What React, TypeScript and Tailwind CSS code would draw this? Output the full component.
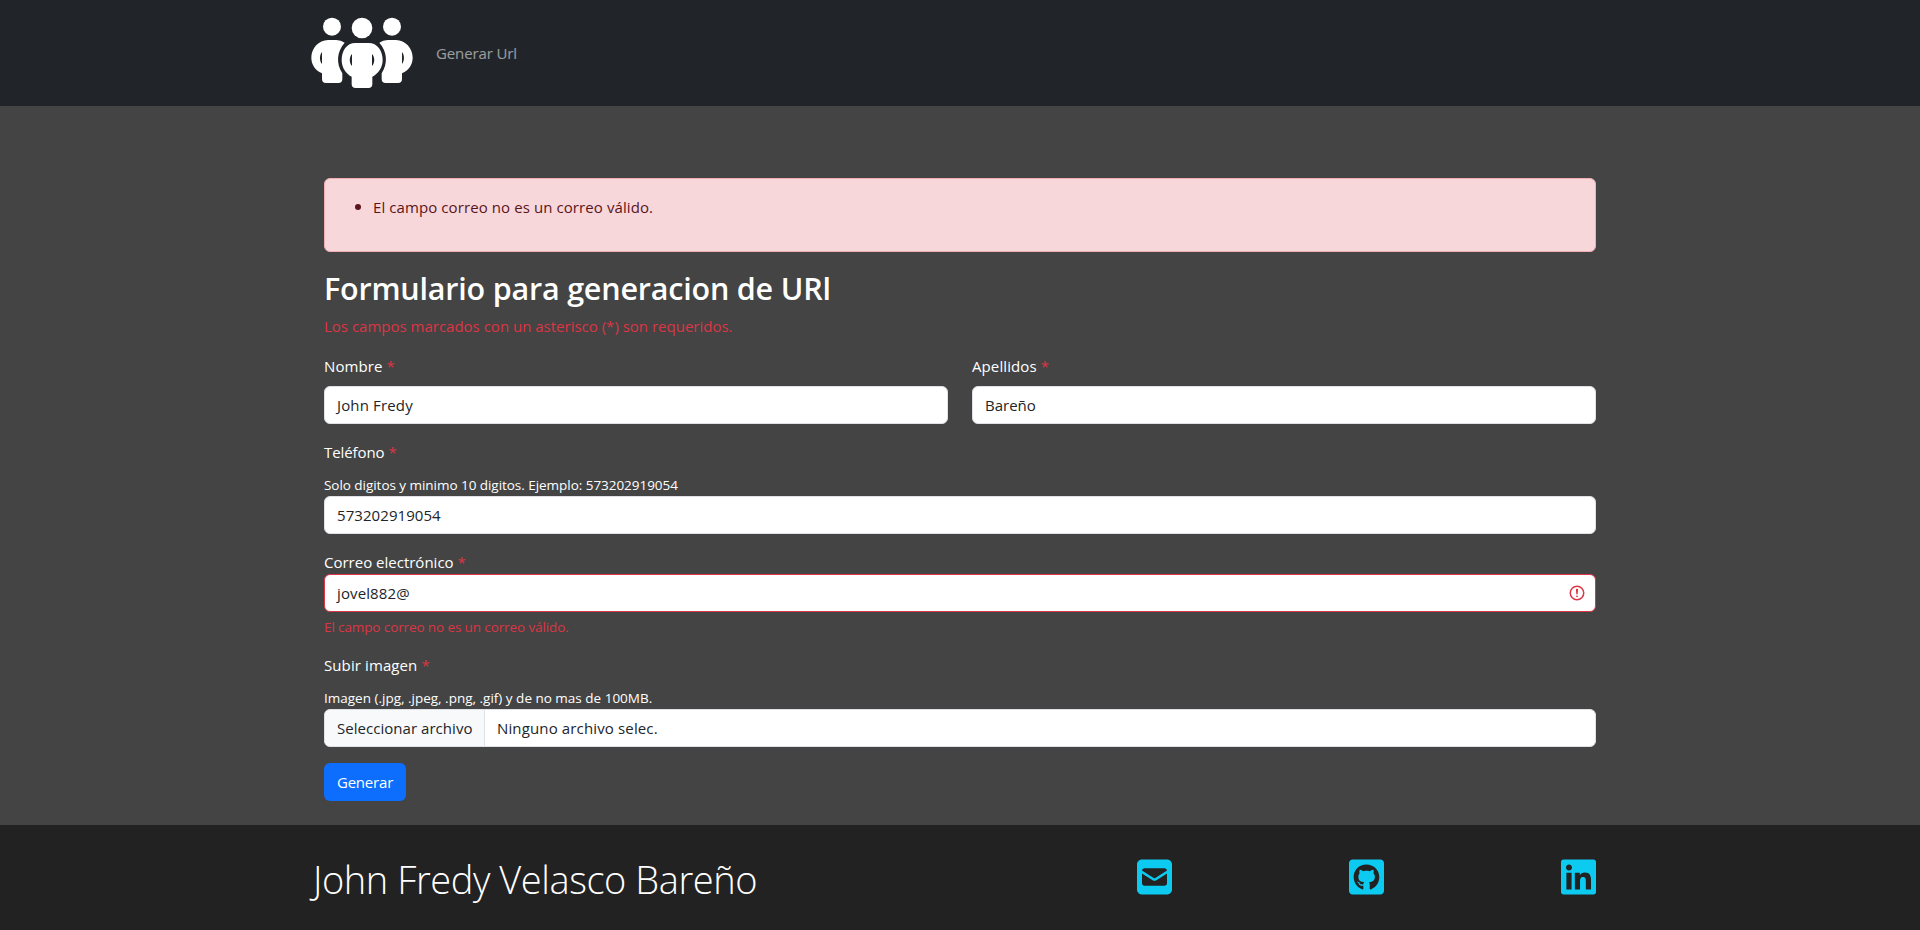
import type { ReactNode } from "react";
import { FaSquareEnvelope } from "react-icons/fa6";
import { FaGithubSquare, FaLinkedin } from "react-icons/fa";

function Logo() {
  const side = (
    <>
      <circle cx="72" cy="50" r="27" />
      <path
        fillRule="evenodd"
        d="M60 90H85Q99 90 110 98C86 125 84 160 103 190V207Q103 219 91 219H54Q42 219 42 207V190C20 180 10 162 10 143C10 115 32 90 60 90ZM42 126C34 136 34 152 42 162Z"
      />
    </>
  );
  return (
    <svg className="h-[86px] w-[104px] overflow-visible" viewBox="12 0 312 258" fill="white">
      {side}
      <g transform="translate(324 0) scale(-1 1)">{side}</g>
      <circle cx="162" cy="54" r="31" />
      <path
        fillRule="evenodd"
        d="M142 99H182C208 99 224 122 224 150C224 172 211 191 193 200V222Q193 234 181 234H143Q131 234 131 222V200C113 191 101 172 101 150C101 122 116 99 142 99ZM132 132C123 142 123 158 132 168ZM192 132V168C201 158 201 142 192 132Z"
      />
    </svg>
  );
}

function Label({ children, className = "" }: { children: ReactNode; className?: string }) {
  return (
    <label className={`block text-[15px] leading-6 ${className}`}>
      {children} <span className="text-[#dc3545]">*</span>
    </label>
  );
}

function Box({ children, className = "border-[#dee2e6]" }: { children: ReactNode; className?: string }) {
  return (
    <div
      className={`flex h-[38px] items-center justify-between overflow-hidden rounded-md border bg-white px-3 text-[15px] leading-6 text-[#212529] ${className}`}
    >
      {children}
    </div>
  );
}

export default function App() {
  return (
    <div className="flex h-[930px] flex-col overflow-hidden bg-[#444] font-['Open_Sans',sans-serif] text-white">
      <nav className="h-[106px] shrink-0 bg-[#212529]">
        <div className="mx-auto flex w-[1296px] items-start pt-2.5">
          <Logo />
          <a className="ml-5 mt-[31px] text-[15px] leading-6 tracking-[-0.12px] text-white/55">Generar Url</a>
        </div>
      </nav>

      <main className="mx-auto w-[1272px] grow pt-[72px]">
        <div className="mb-4 h-[74px] rounded-md border border-[#f1aeb5] bg-[#f8d7da] px-4 py-4 text-[#58151c]">
          <ul className="-ml-0.5">
            <li className="flex items-center gap-3 text-[15px] leading-6 tracking-[0.09px] before:ml-4 before:size-1.5 before:rounded-full before:bg-[#58151c]">
              El campo correo no es un correo válido.
            </li>
          </ul>
        </div>
        <h2 className="mb-[7px] pt-px text-[30.5px] font-semibold leading-[38.4px] tracking-[-0.2px]">
          Formulario para generacion de URl
        </h2>
        <p className="mb-4 text-[15px] leading-6 text-[#dc3545]">
          Los campos marcados con un asterisco (*) son requeridos.
        </p>

        <div className="mb-4 grid grid-cols-2 gap-6">
          <div>
            <Label className="mb-2 tracking-[0.1px]">Nombre</Label>
            <Box>
              <span className="tracking-[0.15px]">John Fredy</span>
            </Box>
          </div>
          <div>
            <Label className="mb-2 tracking-[0.1px]">Apellidos</Label>
            <Box>
              <span>Bareño</span>
            </Box>
          </div>
        </div>

        <div className="mb-4">
          <Label className="mb-2 tracking-[-0.08px]">Teléfono</Label>
          <p className="pt-0.5 text-[13.5px] leading-[22px] tracking-[-0.04px]">
            Solo digitos y minimo 10 digitos. Ejemplo: 573202919054
          </p>
          <Box>
            <span className="tracking-[0.07px]">573202919054</span>
          </Box>
        </div>

        <div className="mb-4">
          <Label>Correo electrónico</Label>
          <Box className="border-[#dc3545]">
            <span className="tracking-[0.12px]">jovel882@</span>
            <svg className="-mr-[2.5px] size-[18px]" viewBox="0 0 12 12" fill="none" stroke="#dc3545">
              <circle cx="6" cy="6" r="4.5" />
              <path strokeLinejoin="round" d="M5.8 3.6h.4L6 6.5z" />
              <circle cx="6" cy="8.2" r=".6" fill="#dc3545" stroke="none" />
            </svg>
          </Box>
          <p className="mt-[5px] text-[13.5px] leading-5 tracking-[-0.11px] text-[#dc3545]">
            El campo correo no es un correo válido.
          </p>
        </div>

        <div className="mb-4">
          <Label className="mb-2 tracking-[0.1px]">Subir imagen</Label>
          <p className="pt-0.5 text-[13.5px] leading-[22px]">Imagen (.jpg, .jpeg, .png, .gif) y de no mas de 100MB.</p>
          <Box>
            <div className="-ml-3 flex h-full items-center">
              <span className="flex h-full w-40 items-center whitespace-nowrap border-r border-[#dee2e6] bg-[#f8f9fa] pl-3 tracking-[0.04px]">
                Seleccionar archivo
              </span>
              <span className="pl-3 tracking-[0.14px]">Ninguno archivo selec.</span>
            </div>
          </Box>
        </div>

        <button className="flex h-[38px] w-[82px] items-center justify-center rounded-md bg-[#0d6efd] text-[15px] leading-6 tracking-[-0.2px]">
          Generar
        </button>
      </main>

      <footer className="h-[105px] shrink-0 bg-[#222]">
        <div className="mx-auto flex w-[1296px] items-start justify-between pr-3 pt-8">
          <h1 className="pl-px text-[38px] font-light leading-[44px] tracking-[-0.43px]">John Fredy Velasco Bareño</h1>
          <div className="flex w-[459px] justify-between text-[#0dcaf0]">
            <FaSquareEnvelope className="h-10 w-[35px]" />
            <FaGithubSquare className="h-10 w-[35px]" />
            <FaLinkedin className="h-10 w-[35px]" />
          </div>
        </div>
      </footer>
    </div>
  );
}
